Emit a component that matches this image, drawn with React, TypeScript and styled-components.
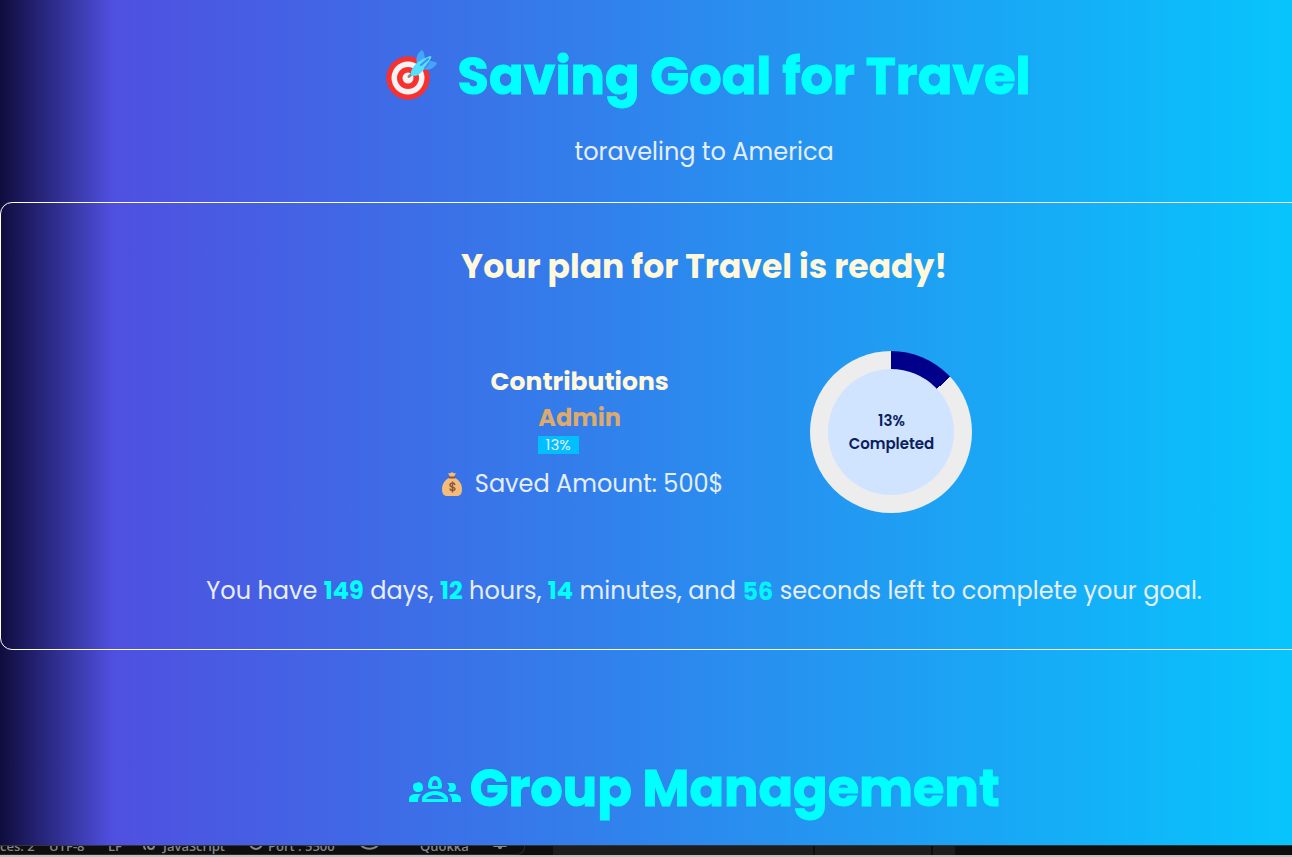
import React from "react";
import styled, { createGlobalStyle } from "styled-components";

const GlobalStyle = createGlobalStyle`
  * { box-sizing: border-box; }
  body {
    margin: 0;
    overflow-x: hidden;
    background: #0d0d0d;
    color: #e6eeff;
    font-family: Poppins, Inter, "Open Sans", sans-serif;
  }
  h1, h2, h3, p { margin: 0; }
`;

const Window = styled.div`
  min-height: 100vh;
  overflow: hidden;
  display: flex;
  flex-direction: column;
`;

const Page = styled.main`
  width: 109%;
  flex: 1;
  display: flex;
  flex-direction: column;
  align-items: center;
  background: linear-gradient(90deg, #0f0c3d 0%, #4f50e0 8%, #00d0ff 100%);
`;

const Heading = styled.h1<{ $gap: number }>`
  display: flex;
  align-items: center;
  gap: ${({ $gap }) => $gap}px;
  font-size: 51px;
  line-height: 80px;
  font-weight: 700;
  color: #00ffff;
  -webkit-text-stroke: 1px #00ffff;
  white-space: nowrap;
`;

const Header = styled.header`
  display: flex;
  flex-direction: column;
  align-items: center;
  gap: 18px;
  padding: 36px 0 32px;
`;

const Text = styled.p`
  display: flex;
  align-items: center;
  gap: 12px;
  font-size: 24px;
  line-height: 36px;
  white-space: nowrap;
`;

const Card = styled.section`
  width: 100%;
  display: flex;
  flex-direction: column;
  align-items: center;
  border: 1px solid #ffffff;
  border-radius: 12px;
  padding: 40px 0 39px;
`;

const CardTitle = styled.h2`
  font-size: 33px;
  line-height: 48px;
  font-weight: 700;
  color: #fff8dc;
`;

const Summary = styled.div`
  display: flex;
  align-items: center;
  gap: 87px;
  margin: 60px 0;
`;

const Contributions = styled.div`
  display: flex;
  flex-direction: column;
  align-items: center;
  padding-top: 2px;
`;

const SmallTitle = styled.h3`
  font-size: 25px;
  line-height: 36px;
  font-weight: 700;
  color: #fff8dc;
`;

const Member = styled.h3`
  font-size: 24px;
  line-height: 36px;
  font-weight: 700;
  color: #deaa6c;
`;

const Track = styled.div`
  width: 84px;
  margin-bottom: 12px;
`;

const Share = styled.div`
  width: 41px;
  background: #00bfff;
  font-size: 15px;
  line-height: 18px;
  text-align: center;
`;

const Ring = styled.div`
  width: 162px;
  height: 162px;
  border-radius: 50%;
  display: grid;
  place-items: center;
  background: conic-gradient(#00008b 13%, #ededed 0);
`;

const RingCenter = styled.div`
  width: 126px;
  height: 126px;
  border-radius: 50%;
  display: grid;
  place-content: center;
  background: #d0e3ff;
  color: #0a1f5c;
  font-size: 15px;
  line-height: 23px;
  font-weight: 600;
  text-align: center;
`;

const Countdown = styled.p`
  font-size: 24px;
  line-height: 36px;
  white-space: nowrap;
`;

const Count = styled.strong`
  font-weight: 700;
  color: #00ffff;
`;

const Ticking = styled(Count)`
  display: inline-block;
  vertical-align: middle;
  opacity: 0.9;
`;

const Group = styled.section`
  padding: 98px 0 17px;
`;

const StatusBar = styled.footer`
  height: 12px;
  overflow: hidden;
  display: flex;
  border-top: 1px solid #33343a;
  border-bottom: 2px solid #c4bfc0;
  background: #0e0e0e;
`;

const StatusItems = styled.div`
  flex: none;
  width: 525px;
  height: 9px;
  display: grid;
  grid-template-columns: 49px 59px 34px 21px 86px 19px 92px 60px 73px 1fr;
  align-items: end;
  align-content: end;
  padding-bottom: 1px;
  border: solid #2a2a2a;
  border-width: 0 1px 1px 0;
  border-radius: 0 0 8px 0;
  color: #858688;
  font-family: "Open Sans", sans-serif;
  font-size: 13px;
  font-weight: 600;
  line-height: 14px;
  white-space: nowrap;

  svg { margin-bottom: 3px; }
`;

const Panels = styled.div`
  display: flex;
  gap: 2px;
  margin-left: 28px;
`;

const Panel = styled.div<{ $width: number }>`
  flex: none;
  width: ${({ $width }) => $width}px;
  background: #1d1d1d;
`;

const TargetIcon = () => (
  <svg width="60" height="52" viewBox="-8 0 60 52" stroke="none" aria-hidden="true">
    <circle cx="22" cy="28" r="21.700" fill="#f8312f" />
    <circle cx="22" cy="28" r="16.500" fill="#f4f4f4" />
    <circle cx="22" cy="28" r="11" fill="#f8312f" />
    <circle cx="22" cy="28" r="5.500" fill="#f4f4f4" />
    <path d="M23 26.500 31 19" stroke="#8c8c8c" strokeWidth="3" strokeLinecap="round" />
    <path d="M31 14C29 8 32 2 36 0c2 2 3 5 3 12l5-1c3 0 6 1 7 2-2 5-8 8-14 6z" fill="#46a4fb" />
    <path d="M25 25c-1-5 3-9 7-13l5-3 7-3c1 0 2 1 1 2l-4 7c-4 6-10 14-16 10z" fill="#50e2ff" />
    <path d="m35 15 7-6M39 18l4-5" stroke="#3f8ff0" strokeWidth="2" strokeLinecap="round" />
  </svg>
);

const MoneyBag = () => (
  <svg width="27" height="25" viewBox="-6 0 27 25" aria-hidden="true">
    <path d="M6 1q2 1 4-1 2 2 4 1l-2 4H8z" fill="#f3bd78" />
    <path d="M7 6h6c4 2 7 6 7 11 0 5-2 7-5 7H5c-3 0-5-2-5-7C0 12 3 8 7 6z" fill="#f3bd78" />
    <path d="M7 4.500h6v2H7z" fill="#8c5543" />
    <path d="M13 13c-1-3-5-2-5 0 0 3 5 1.500 5 4 0 2-5 2-5-.5M10.500 9.500v11" fill="none" stroke="#8c5543" strokeWidth="1.500" />
  </svg>
);

const GroupsIcon = () => (
  <svg width="52" height="28" viewBox="0 0 52 28" fill="currentColor" aria-hidden="true">
    <path d="M4 13c0-3 1-4 3-4 1-1 4-1 5 0 1 1 2 2 2 4v1c0 3-2 4-5 4s-5-2-5-5z" />
    <path d="M0 28v-3c0-3 3-5 7-5h5c-2 2-3 4-3 6v2z" />
    <path d="M38 9h5c3 0 4 2 4 5 0 2-2 4-5 4-2 0-3-1-3-2 2-2 2-4-1-7z" />
    <path d="M52 28v-3c0-3-3-5-7-5h-5c2 2 3 4 3 6v2z" />
    <path
      fillRule="evenodd"
      d="M26 2c4 0 7 4 7 10 0 2-1 3-3 3h-8c-2 0-3-1-3-3 0-6 3-10 7-10zm0 4c-2 0-3 2-3 6h6c0-4-1-6-3-6z"
    />
    <path
      fillRule="evenodd"
      d="M13 28v-3c0-4 6-8 13-8s13 4 13 8v3zm4-3h18c-1-2-5-4-9-4s-8 2-9 4z"
    />
  </svg>
);

const BracesIcon = () => (
  <svg width="14" height="12" viewBox="0 0 14 12" fill="none" stroke="currentColor" strokeWidth="2" aria-hidden="true">
    <path d="M4 0C1 0 3 5 1 6c2 1 0 5 3 5" />
    <circle cx="9" cy="8" r="3" />
  </svg>
);

const PortIcon = () => (
  <svg width="15" height="14" viewBox="0 0 15 14" fill="none" stroke="currentColor" strokeWidth="2" aria-hidden="true">
    <circle cx="7" cy="7" r="6" />
  </svg>
);

const AssistantIcon = () => (
  <svg width="19" height="14" viewBox="0 0 19 14" fill="none" stroke="currentColor" strokeWidth="2" aria-hidden="true">
    <path d="M1 6v3c4 5 13 5 17 0V6M7 6v4M12 6v4" />
  </svg>
);

const BellIcon = () => (
  <svg width="14" height="12" viewBox="0 0 14 12" fill="currentColor" aria-hidden="true">
    <path d="M3 0h8v5l3 4H9c0 3-4 3-4 0H0l3-4z" />
  </svg>
);

export default function App() {
  return (
    <>
      <GlobalStyle />
      <Window>
        <Page>
          <Header>
            <Heading $gap={20}><TargetIcon />Saving Goal for Travel</Heading>
            <Text>toraveling to America</Text>
          </Header>
          <Card>
            <CardTitle>Your plan for Travel is ready!</CardTitle>
            <Summary>
              <Contributions>
                <SmallTitle>Contributions</SmallTitle>
                <Member>Admin</Member>
                <Track><Share>13%</Share></Track>
                <Text><MoneyBag />Saved Amount: 500$</Text>
              </Contributions>
              <Ring><RingCenter><span>13%</span><span>Completed</span></RingCenter></Ring>
            </Summary>
            <Countdown>
              You have <Count>149</Count> days, <Count>12</Count> hours, <Count>14</Count> minutes, and{" "}
              <Ticking>56</Ticking> seconds left to complete your goal.
            </Countdown>
          </Card>
          <Group>
            <Heading $gap={9}><GroupsIcon />Group Management</Heading>
          </Group>
        </Page>
        <StatusBar>
          <StatusItems>
            <span>ces: 2</span>
            <span>UTF-8</span>
            <span>LF</span>
            <BracesIcon />
            <span>JavaScript</span>
            <PortIcon />
            <span>Port : 5500</span>
            <AssistantIcon />
            <span>Quokka</span>
            <BellIcon />
          </StatusItems>
          <Panels>
            <Panel $width={260} />
            <Panel $width={116} />
            <Panel $width={22} />
          </Panels>
        </StatusBar>
      </Window>
    </>
  );
}
